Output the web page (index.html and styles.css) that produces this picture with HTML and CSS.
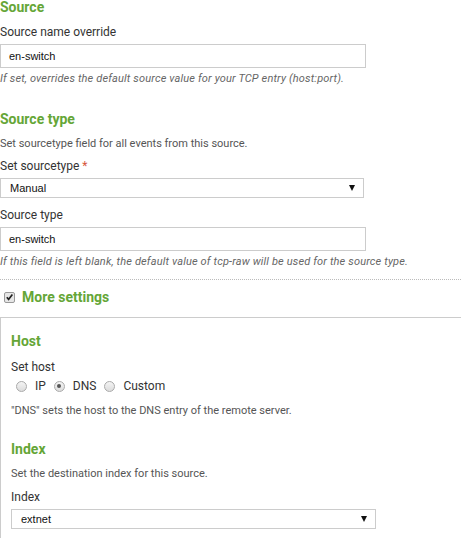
FILE: index.html
```html
<!DOCTYPE html>
<html>
<head>
<meta charset="utf-8">
<link rel="stylesheet" href="styles.css">
</head>
<body>
<div class="page">
  <section class="sect">
    <h2 class="heading">Source</h2>
    <div class="label label-1">Source name override</div>
    <div class="input">en-switch</div>
    <div class="help">If set, overrides the default source value for your TCP entry (host:port).</div>
  </section>

  <section class="sect sect-2">
    <h2 class="heading">Source type</h2>
    <div class="desc">Set sourcetype field for all events from this source.</div>
    <div class="label label-2">Set sourcetype <span class="req">*</span></div>
    <div class="select sel-1"><span>Manual</span><span class="arrow"></span></div>
    <div class="label label-3">Source type</div>
    <div class="input">en-switch</div>
    <div class="help">If this field is left blank, the default value of tcp-raw will be used for the source type.</div>
  </section>

  <div class="divider"></div>

  <div class="more">
    <span class="check"><svg width="10" height="10" viewBox="0 0 10 10"><path d="M2 5.2 L4 7.6 L8.2 2.2" fill="none" stroke="#222" stroke-width="1.8"/></svg></span>
    <span class="more-text">More settings</span>
  </div>

  <div class="box">
    <h2 class="heading">Host</h2>
    <div class="label label-h">Set host</div>
    <div class="radios">
      <span class="radio"></span><span class="rlabel">IP</span>
      <span class="radio on"></span><span class="rlabel">DNS</span>
      <span class="radio"></span><span class="rlabel">Custom</span>
    </div>
    <div class="desc desc-h">"DNS" sets the host to the DNS entry of the remote server.</div>

    <h2 class="heading heading-i">Index</h2>
    <div class="desc">Set the destination index for this source.</div>
    <div class="label label-i">Index</div>
    <div class="select sel-2"><span>extnet</span><span class="arrow"></span></div>
  </div>
</div>
</body>
</html>
```

FILE: styles.css
```css
html, body {
  margin: 0;
  padding: 0;
  background: #fff;
}
body {
  font-family: Roboto, "Noto Sans", sans-serif;
  color: #333;
  font-size: 12px;
  overflow: hidden;
}
.page {
  width: 461px;
  height: 538px;
  overflow: hidden;
}
.heading {
  margin: 0;
  font-size: 14px;
  line-height: 14px;
  font-weight: bold;
  color: #65a637;
}
.label {
  margin-top: 12px;
  font-size: 12px;
  line-height: 14px;
  color: #333;
}
.label-1 {
  margin-top: 11px;
}
.input {
  box-sizing: border-box;
  width: 366px;
  height: 24px;
  margin-top: 5px;
  border: 1px solid #ccc;
  padding-left: 8px;
  font-family: "Liberation Sans", Arial, sans-serif;
  font-size: 11px;
  line-height: 22px;
  color: #111;
}
.help {
  margin-top: 5px;
  font-size: 11px;
  line-height: 12px;
  font-style: italic;
  letter-spacing: 0.15px;
  color: #666;
}
.sect-2 {
  margin-top: 27px;
}
.desc {
  margin-top: 12px;
  font-size: 11px;
  line-height: 12px;
  color: #555;
}
.label-2 {
  margin-top: 9px;
}
.label-3 {
  margin-top: 10px;
}
.label-i {
  margin-top: 10px;
}
.req {
  color: #d6563c;
}
.select {
  box-sizing: border-box;
  display: flex;
  align-items: center;
  justify-content: space-between;
  width: 364px;
  height: 20px;
  margin-top: 5px;
  border: 1px solid #ccc;
  padding: 0 8px 0 9px;
  font-family: "Liberation Sans", Arial, sans-serif;
  font-size: 11px;
  color: #111;
}
.sel-2 {
  width: 365px;
}
.arrow {
  width: 0;
  height: 0;
  border-left: 3.5px solid transparent;
  border-right: 3.5px solid transparent;
  border-top: 6px solid #111;
}
.divider {
  margin-top: 11px;
  border-top: 1px dotted #bbb;
}
.more {
  display: flex;
  align-items: center;
  margin-top: 9px;
  height: 16px;
  padding-left: 4px;
}
.check {
  box-sizing: border-box;
  width: 11px;
  height: 11px;
  border: 1px solid #999;
  border-radius: 2px;
  background: #e6e6e6;
  display: flex;
  align-items: center;
  justify-content: center;
}
.check svg {
  display: block;
}
.more-text {
  margin-left: 7px;
  font-size: 14px;
  font-weight: bold;
  color: #65a637;
}
.box {
  margin-top: 12px;
  border-top: 1px solid #ccc;
  border-left: 1px solid #ccc;
  padding: 16px 0 0 10px;
  height: 240px;
}
.label-h {
  margin-top: 12px;
}
.radios {
  display: flex;
  align-items: center;
  margin-top: 5px;
  padding-left: 5px;
  height: 14px;
}
.radio {
  box-sizing: border-box;
  width: 11px;
  height: 11px;
  border-radius: 50%;
  border: 1px solid #aaa;
  background: linear-gradient(#f4f4f4, #dcdcdc);
  position: relative;
}
.radio.on::after {
  content: "";
  position: absolute;
  left: 2.5px;
  top: 2.5px;
  width: 4px;
  height: 4px;
  border-radius: 50%;
  background: #555;
}
.rlabel {
  margin-left: 8px;
  margin-right: 8px;
  font-size: 12px;
}
.desc-h {
  margin-top: 12px;
}
.heading-i {
  margin-top: 25px;
}
```
